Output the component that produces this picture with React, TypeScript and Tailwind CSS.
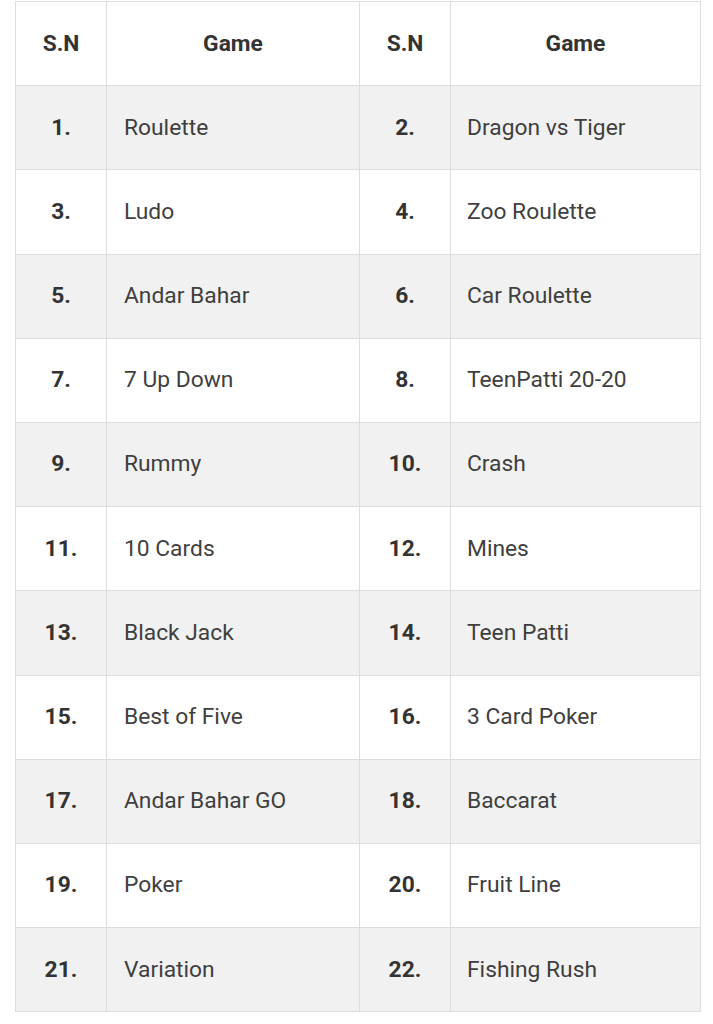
const games: string[] = [
  "Roulette",
  "Dragon vs Tiger",
  "Ludo",
  "Zoo Roulette",
  "Andar Bahar",
  "Car Roulette",
  "7 Up Down",
  "TeenPatti 20-20",
  "Rummy",
  "Crash",
  "10 Cards",
  "Mines",
  "Black Jack",
  "Teen Patti",
  "Best of Five",
  "3 Card Poker",
  "Andar Bahar GO",
  "Baccarat",
  "Poker",
  "Fruit Line",
  "Variation",
  "Fishing Rush",
];

const rows: [number, string, number, string][] = [];
for (let i = 0; i < games.length; i += 2) {
  rows.push([i + 1, games[i], i + 2, games[i + 1]]);
}

export default function App() {
  return (
    <div
      className="min-h-[1024px] w-[713px] bg-white pt-[1px] pl-[15px]"
      style={{ fontFamily: "Roboto, 'Liberation Sans', sans-serif" }}
    >
      <table className="w-[685px] table-fixed border-collapse text-[22.8px] text-[#3f3f3f]">
        <colgroup>
          <col className="w-[91px]" />
          <col className="w-[253px]" />
          <col className="w-[91px]" />
          <col className="w-[250px]" />
        </colgroup>
        <thead>
          <tr className="h-[84.2px] bg-white">
            <th className="border border-[#dddddd] text-center font-bold text-[#333]">S.N</th>
            <th className="border border-[#dddddd] text-center font-bold text-[#333]">Game</th>
            <th className="border border-[#dddddd] text-center font-bold text-[#333]">S.N</th>
            <th className="border border-[#dddddd] text-center font-bold text-[#333]">Game</th>
          </tr>
        </thead>
        <tbody>
          {rows.map(([a, ga, b, gb], i) => (
            <tr key={a} className={i % 2 === 0 ? "h-[84.2px] bg-[#f1f1f1]" : "h-[84.2px] bg-white"}>
              <td className="border border-[#dddddd] text-center font-bold text-[#333]">{a}.</td>
              <td className="border border-[#dddddd] pl-[17px]">{ga}</td>
              <td className="border border-[#dddddd] text-center font-bold text-[#333]">{b}.</td>
              <td className="border border-[#dddddd] pl-[16px]">{gb}</td>
            </tr>
          ))}
        </tbody>
      </table>
    </div>
  );
}
